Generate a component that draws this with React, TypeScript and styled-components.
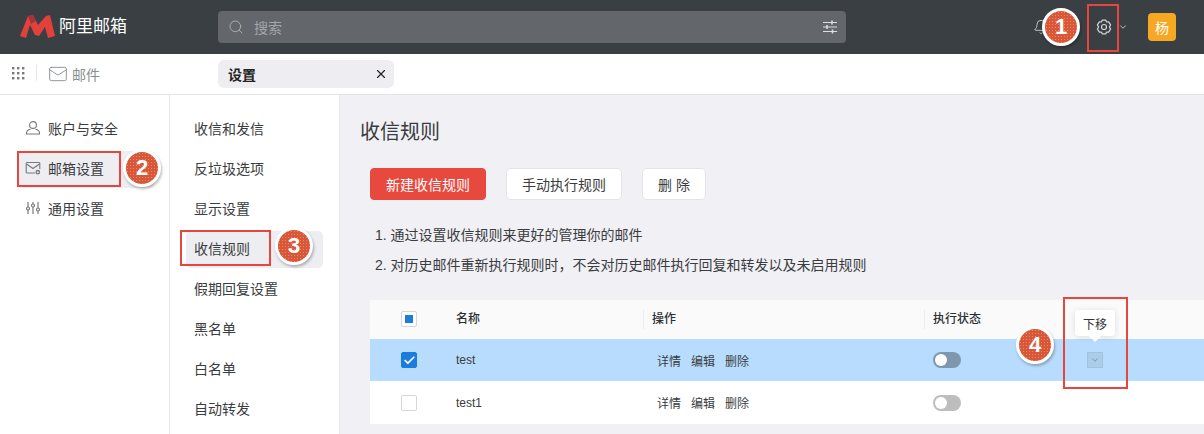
import React from "react";
import styled, { createGlobalStyle } from "styled-components";
import { Search, X, Bell, ChevronDown, Check, Mail } from "lucide-react";

const Global = createGlobalStyle`
  html, body { margin: 0; padding: 0; background: #fff; }
  * { box-sizing: border-box; }
  body { font-family: "Liberation Sans", "Noto Sans CJK SC", sans-serif; }
`;

const Page = styled.div`
  position: relative;
  width: 1204px;
  height: 434px;
  overflow: hidden;
  display: flex;
  flex-direction: column;
  color: #333;
`;

const TopBar = styled.header`
  height: 54px;
  flex: none;
  background: #3a3f44;
  display: flex;
  align-items: center;
  padding-left: 20px;
`;
const Logo = styled.div`
  width: 198px;
  flex: none;
  display: flex;
  align-items: center;
  gap: 4px;
`;
const LogoText = styled.span`
  color: #fff;
  font-size: 17px;
  line-height: 20px;
`;
const SearchBox = styled.div`
  width: 628px;
  height: 32px;
  flex: none;
  background: #63666b;
  border-radius: 4px;
  display: flex;
  align-items: center;
  padding: 0 9px 0 10px;
  color: #aeb0b3;
  font-size: 14px;
`;
const SearchLabel = styled.span`
  flex: 1;
  margin-left: 10px;
  color: #a5a7aa;
`;
const TopActions = styled.div`
  flex: 1;
  display: flex;
  align-items: center;
  padding-left: 187px;
  color: #d2d4d6;
`;
const GearSlot = styled.div`
  margin-left: 39px;
  width: 32px;
  display: flex;
  justify-content: center;
`;
const Caret = styled.div`
  margin-left: -2px;
  width: 10px;
  display: flex;
`;
const Avatar = styled.div`
  margin-left: 20px;
  width: 28px;
  height: 28px;
  border-radius: 4px;
  background: #f7a823;
  color: #fff;
  font-size: 14px;
  display: flex;
  align-items: center;
  justify-content: center;
`;
const TabBar = styled.div`
  height: 41px;
  flex: none;
  background: #fff;
  border-bottom: 1px solid #e4e4e8;
  display: flex;
  align-items: flex-start;
`;
const Apps = styled.div`
  width: 37px;
  height: 16px;
  margin-top: 11px;
  padding-left: 12px;
  border-right: 1px solid #e6e6ea;
  display: flex;
  align-items: center;
`;
const AppName = styled.div`
  width: 181px;
  height: 40px;
  display: flex;
  align-items: center;
  gap: 4px;
  padding-left: 11px;
  font-size: 14px;
  color: #8a8d92;
`;
const Tab = styled.div`
  width: 176px;
  height: 28px;
  margin-top: 6px;
  background: #eeeef2;
  border-radius: 6px;
  display: flex;
  align-items: center;
  justify-content: space-between;
  padding: 0 6px 0 10px;
  font-size: 14px;
  font-weight: 700;
  color: #222;
`;
const Body = styled.div`
  flex: 1;
  display: flex;
  min-height: 0;
`;
const Side = styled.nav<{ $w: number }>`
  width: ${(p) => p.$w}px;
  flex: none;
  background: #fff;
  border-right: 1px solid #e6e6ea;
  padding-top: 14px;
  display: flex;
  flex-direction: column;
`;
const NavItem = styled.div<{ $active?: boolean; $left: number; $width: number }>`
  height: 37px;
  margin: 1.5px 0 1.5px ${(p) => p.$left}px;
  width: ${(p) => p.$width}px;
  flex: none;
  padding: 0 0 2px 8px;
  border-radius: 5px;
  background: ${(p) => (p.$active ? "#eeeef2" : "transparent")};
  display: flex;
  align-items: center;
  font-size: 14px;
  color: #3a3c40;
`;
const NavIcon = styled.span`
  width: 23px;
  flex: none;
  display: flex;
  align-items: center;
`;
const Content = styled.main`
  flex: 1;
  min-width: 0;
  background: #f0f0f5;
  padding: 24px 0 0 20px;
`;
const Title = styled.h1`
  margin: 0;
  font-size: 20px;
  font-weight: 400;
  line-height: 26px;
  color: #3a3c40;
`;
const Toolbar = styled.div`
  margin: 23px 0 0 10px;
  display: flex;
  gap: 20px;
`;
const Button = styled.button<{ $primary?: boolean; $w: number }>`
  width: ${(p) => p.$w}px;
  height: 32px;
  padding: 0;
  border-radius: 4px;
  border: 1px solid ${(p) => (p.$primary ? "#e8493f" : "#e4e4e8")};
  background: ${(p) => (p.$primary ? "#e8493f" : "#fff")};
  color: ${(p) => (p.$primary ? "#fff" : "#3a3c40")};
  font: inherit;
  font-size: 14px;
`;
const Notes = styled.div`
  margin: 20px 0 0 15px;
  font-size: 14px;
  line-height: 30px;
  color: #3a3c40;
`;
const Table = styled.div`
  margin: 20px 0 0 10px;
  font-size: 12px;
  color: #3a3c40;
`;
const Row = styled.div<{ $bg: string; $h: number; $head?: boolean }>`
  display: grid;
  grid-template-columns: 86px 187px 281px 163px 1fr;
  align-items: center;
  height: ${(p) => p.$h}px;
  padding-bottom: ${(p) => (p.$head ? 2 : 0)}px;
  background: ${(p) => p.$bg};
`;
const CheckCell = styled.div`
  padding-left: 31px;
  display: flex;
`;
const CheckBox = styled.div<{ $on?: boolean }>`
  width: 16px;
  height: 16px;
  border-radius: 2px;
  border: 1px solid ${(p) => (p.$on ? "#1a7cdb" : "#d6d6da")};
  background: ${(p) => (p.$on ? "#1a7cdb" : "#fff")};
  color: #fff;
  display: flex;
  align-items: center;
  justify-content: center;
`;
const Partial = styled.span`
  width: 8px;
  height: 8px;
  background: #1a7cdb;
`;
const HeadCell = styled.div<{ $divider?: boolean }>`
  height: 20px;
  line-height: 20px;
  font-weight: 500;
  color: #2c2e31;
  padding-left: ${(p) => (p.$divider ? 8 : 0)}px;
  border-left: ${(p) => (p.$divider ? "1px solid #ececf0" : "0")};
`;
const Ops = styled.div`
  padding-left: 14px;
  display: flex;
  gap: 10px;
`;
const Switch = styled.div<{ $tone: string }>`
  margin-left: 9px;
  width: 28px;
  height: 16px;
  border-radius: 8px;
  background: ${(p) => p.$tone};
  padding: 2px;
  &::after {
    content: "";
    display: block;
    width: 12px;
    height: 12px;
    border-radius: 50%;
    background: #fff;
  }
`;
const MoveDown = styled.div`
  width: 16px;
  height: 16px;
  background: #abcde9;
  border: 1px solid #9fc2de;
  display: flex;
  align-items: center;
  justify-content: center;
  color: #6e8aa3;
`;
const Tooltip = styled.div`
  position: absolute;
  left: 1075px;
  top: 310px;
  width: 40px;
  height: 26px;
  background: #fff;
  border-radius: 3px;
  box-shadow: 0 1px 6px rgba(0, 0, 0, 0.12);
  font-size: 12px;
  color: #333;
  display: flex;
  align-items: center;
  justify-content: center;
  &::after {
    content: "";
    position: absolute;
    left: 14px;
    bottom: -6px;
    border-left: 6px solid transparent;
    border-right: 6px solid transparent;
    border-top: 6px solid #fff;
  }
`;
const Mark = styled.div<{ $x: number; $y: number; $w: number; $h: number }>`
  position: absolute;
  left: ${(p) => p.$x}px;
  top: ${(p) => p.$y}px;
  width: ${(p) => p.$w}px;
  height: ${(p) => p.$h}px;
  border: 2px solid #e8453c;
  pointer-events: none;
`;
const Badge = styled.div<{ $x: number; $y: number }>`
  position: absolute;
  left: ${(p) => p.$x - 19}px;
  top: ${(p) => p.$y - 19}px;
  width: 38px;
  height: 38px;
  border-radius: 50%;
  border: 3px solid #fff;
  background-color: #d8573a;
  background-image: radial-gradient(rgba(255, 205, 130, 0.45) 0.6px, transparent 0.8px);
  background-size: 3px 3px;
  box-shadow: 1px 2px 3px rgba(0, 0, 0, 0.28);
  color: #fff;
  font-size: 22px;
  font-weight: 700;
  display: flex;
  align-items: center;
  justify-content: center;
`;

const MLogo = () => (
  <svg width="35" height="24" viewBox="0 0 35 24">
    <path
      d="M0 21 L8 1 L13 0 L18 10 L26 1 L30 0 L35 21 L28 23 L25 12 L19 21 L15 20 L10 10 L6 23 Z"
      fill="#e2403a"
    />
    <path d="M8 1 L13 0 L16 6 L11 9 Z" fill="#a5323a" />
  </svg>
);
const Sliders = () => (
  <svg width="14" height="14" viewBox="0 0 14 14" stroke="#dcdddf" strokeWidth="1" fill="none">
    <path d="M0 2.5H14M0 7H14M0 11.5H14" />
    <path d="M9 0.5V4.5M4 5V9M9.5 9.5V13.5" strokeWidth="1.6" />
  </svg>
);
const Gear = () => (
  <svg width="16" height="16" viewBox="0 0 16 16" fill="none" stroke="#d2d4d6" strokeWidth="1.2" strokeLinejoin="round">
    <path d="M6.2 1.2 H9.8 L10.6 3 L12.6 2.8 L14.6 5.9 L13.4 8 L14.6 10.1 L12.6 13.2 L10.6 13 L9.8 14.8 H6.2 L5.4 13 L3.4 13.2 L1.4 10.1 L2.6 8 L1.4 5.9 L3.4 2.8 L5.4 3 Z" />
    <circle cx="8" cy="8" r="2.5" />
  </svg>
);
const AppsGrid = () => (
  <svg width="13" height="13" viewBox="0 0 13 13" fill="#77797d">
    {[0, 5, 10].flatMap((y) =>
      [0, 5, 10].map((x) => <rect key={`${x}-${y}`} x={x} y={y} width="2.4" height="2.4" />)
    )}
  </svg>
);
const UserIcon = () => (
  <svg width="16" height="16" viewBox="0 0 16 16" fill="none" stroke="#77797d" strokeWidth="1.1">
    <circle cx="8" cy="5" r="3.4" />
    <path d="M5.5 9.2 C2.5 9.8 1.5 11 1.5 13 V14 H14.5 V13 C14.5 11 13.5 9.8 10.5 9.2" />
  </svg>
);
const MailGear = () => (
  <svg width="16" height="16" viewBox="0 0 16 16" fill="none" stroke="#77797d" strokeWidth="1.1">
    <path d="M10 13H2.5 A1 1 0 0 1 1.2 12 V3.5 A1 1 0 0 1 2.5 2.5 H13.5 A1 1 0 0 1 14.8 3.5 V9" />
    <path d="M1.5 4 L8 8.5 L14.5 4" />
    <circle cx="12.8" cy="12.2" r="1.7" strokeWidth="1.4" />
  </svg>
);
const TuneIcon = () => (
  <svg width="16" height="16" viewBox="0 0 16 16" fill="none" stroke="#77797d" strokeWidth="1.2">
    <path d="M3 2V7M3 10V14M8 2V4M8 7V14M13 2V8M13 11V14" />
    <circle cx="3" cy="8.5" r="1.5" />
    <circle cx="8" cy="5.5" r="1.5" />
    <circle cx="13" cy="9.5" r="1.5" />
  </svg>
);

const primaryNav = [
  { label: "账户与安全", icon: <UserIcon /> },
  { label: "邮箱设置", icon: <MailGear />, active: true },
  { label: "通用设置", icon: <TuneIcon /> },
];
const secondaryNav = ["收信和发信", "反垃圾选项", "显示设置", "收信规则", "假期回复设置", "黑名单", "白名单", "自动转发"];

const OpLinks = () => (
  <Ops>
    <span>详情</span>
    <span>编辑</span>
    <span>删除</span>
  </Ops>
);

export default function App() {
  return (
    <Page>
      <Global />
      <TopBar>
        <Logo>
          <MLogo />
          <LogoText>阿里邮箱</LogoText>
        </Logo>
        <SearchBox>
          <Search size={16} strokeWidth={1.4} />
          <SearchLabel>搜索</SearchLabel>
          <Sliders />
        </SearchBox>
        <TopActions>
          <Bell size={16} strokeWidth={1.3} />
          <GearSlot>
            <Gear />
          </GearSlot>
          <Caret>
            <ChevronDown size={10} />
          </Caret>
          <Avatar>杨</Avatar>
        </TopActions>
      </TopBar>
      <TabBar>
        <Apps>
          <AppsGrid />
        </Apps>
        <AppName>
          <Mail size={20} strokeWidth={1.1} />
          邮件
        </AppName>
        <Tab>
          设置
          <X size={14} color="#222" />
        </Tab>
      </TabBar>
      <Body>
        <Side $w={170}>
          {primaryNav.map((n) => (
            <NavItem key={n.label} $active={n.active} $left={17} $width={137}>
              <NavIcon>{n.icon}</NavIcon>
              {n.label}
            </NavItem>
          ))}
        </Side>
        <Side $w={170}>
          {secondaryNav.map((n) => (
            <NavItem key={n} $active={n === "收信规则"} $left={16} $width={137}>
              {n}
            </NavItem>
          ))}
        </Side>
        <Content>
          <Title>收信规则</Title>
          <Toolbar>
            <Button $primary $w={116}>新建收信规则</Button>
            <Button $w={116}>手动执行规则</Button>
            <Button $w={64}>删 除</Button>
          </Toolbar>
          <Notes>
            <div>1. 通过设置收信规则来更好的管理你的邮件</div>
            <div>2. 对历史邮件重新执行规则时，不会对历史邮件执行回复和转发以及未启用规则</div>
          </Notes>
          <Table>
            <Row $bg="#fafafa" $h={39} $head>
              <CheckCell>
                <CheckBox>
                  <Partial />
                </CheckBox>
              </CheckCell>
              <HeadCell>名称</HeadCell>
              <HeadCell $divider>操作</HeadCell>
              <HeadCell $divider>执行状态</HeadCell>
              <div />
            </Row>
            <Row $bg="#b8dcfd" $h={42}>
              <CheckCell>
                <CheckBox $on>
                  <Check size={13} strokeWidth={3.2} />
                </CheckBox>
              </CheckCell>
              <div>test</div>
              <OpLinks />
              <div>
                <Switch $tone="#7f97ad" />
              </div>
              <div>
                <MoveDown>
                  <ChevronDown size={10} />
                </MoveDown>
              </div>
            </Row>
            <Row $bg="#fff" $h={43}>
              <CheckCell>
                <CheckBox />
              </CheckCell>
              <div>test1</div>
              <OpLinks />
              <div>
                <Switch $tone="#bdbdbd" />
              </div>
              <div />
            </Row>
          </Table>
        </Content>
      </Body>
      <Tooltip>下移</Tooltip>
      <Mark $x={1087} $y={4} $w={32} $h={48} />
      <Mark $x={17} $y={151} $w={104} $h={36} />
      <Mark $x={180} $y={230} $w={91} $h={36} />
      <Mark $x={1063} $y={297} $w={65} $h={92} />
      <Badge $x={1061} $y={27}>1</Badge>
      <Badge $x={142} $y={168}>2</Badge>
      <Badge $x={294} $y={246}>3</Badge>
      <Badge $x={1035} $y={345}>4</Badge>
    </Page>
  );
}
